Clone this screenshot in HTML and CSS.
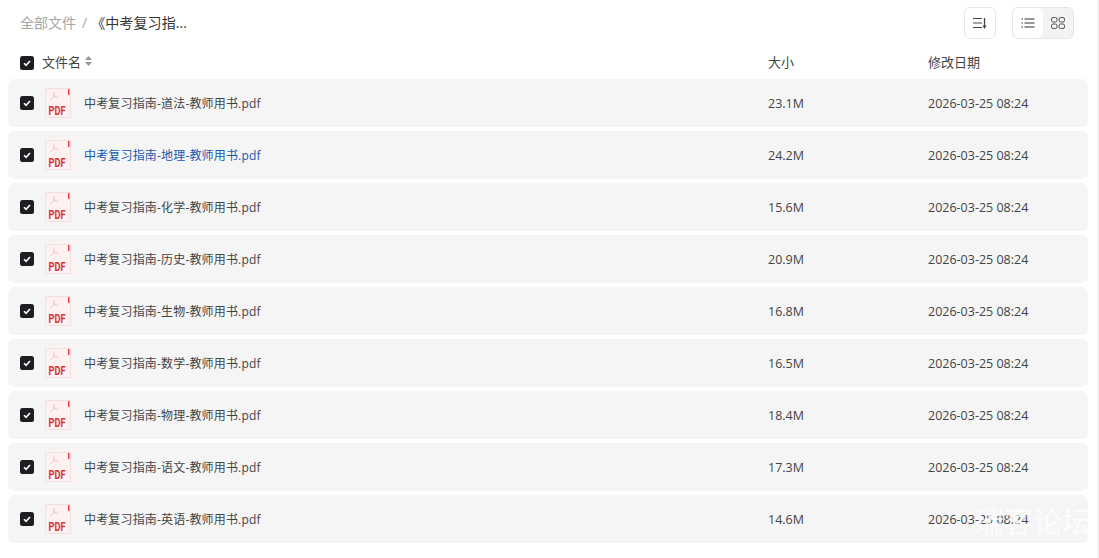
FILE: index.html
```html
<!DOCTYPE html>
<html lang="zh">
<head>
<meta charset="utf-8">
<title>文件</title>
<link rel="stylesheet" href="styles.css">
</head>
<body>
<svg class="defs" width="0" height="0" aria-hidden="true">
  <symbol id="pdf" viewBox="0 0 26 30">
    <path d="M.5.5H25.500V29.500H.5Z" fill="#fdf1f1" stroke="#f6dede"/>
    <path d="M23 1H24.500V7H23Z" fill="#e2434b"/>
    <path d="M5 12C8 10 9.500 7.500 9.500 5C9.500 4 8.500 4 8.500 5.500C9 8 11 9.500 14 9.500M8 9.500L12 8" fill="none" stroke="#f4cfd0" stroke-width="1"/>
  </symbol>
  <symbol id="check" viewBox="0 0 14 14">
    <rect width="14" height="14" rx="2.500" fill="#1d1d22"/>
    <path d="M4 7.200 6.100 9.300 10 5" fill="none" stroke="#fff" stroke-width="1.600"/>
  </symbol>
</svg>
<main class="page">
  <header class="topbar">
    <nav class="crumbs">
      <span class="crumb-root">全部文件</span>
      <span class="crumb-sep">/</span>
      <span class="crumb-current">《中考复习指...</span>
    </nav>
    <div class="tools">
      <button class="tool-btn" aria-label="排序">
        <svg width="14" height="14" viewBox="0 0 14 14"><path d="M0 2.500H9M0 7H9M0 11.500H9" stroke="#444" stroke-width="1.200" fill="none"/><path d="M11.500 2V11" stroke="#444" stroke-width="1.300"/><path d="M9.500 9.500H13.500L11.500 13Z" fill="#444"/></svg>
      </button>
      <div class="view-switch">
        <button class="view-btn view-active" aria-label="列表">
          <svg width="14" height="12" viewBox="0 0 14 12"><path d="M3.500 2H13.500M3.500 6H13.500M3.500 10H13.500" stroke="#333" stroke-width="1.100"/><path d="M.5 2H2M.5 6H2M.5 10H2" stroke="#333" stroke-width="1.100"/></svg>
        </button>
        <button class="view-btn" aria-label="网格">
          <svg width="14" height="12" viewBox="0 0 14 12" fill="none" stroke="#555" stroke-width="1"><rect x=".5" y=".5" width="5.500" height="4.500" rx="1.500"/><rect x="8" y=".5" width="5.500" height="4.500" rx="1.500"/><rect x=".5" y="7" width="5.500" height="4.500" rx="1.500"/><rect x="8" y="7" width="5.500" height="4.500" rx="1.500"/></svg>
        </button>
      </div>
    </div>
  </header>
  <div class="head-row">
    <div class="col-name">
      <svg class="check" width="14" height="14"><use href="#check"/></svg>
      <span>文件名</span>
      <svg class="sort" width="7" height="10" viewBox="0 0 7 10"><path d="M3.500 0 7 4H0ZM3.500 10 0 6H7Z" fill="#999"/></svg>
    </div>
    <div class="col-size">大小</div>
    <div class="col-date">修改日期</div>
  </div>
  <ul class="list">
    <li class="row"><div class="col-name"><svg class="check" width="14" height="14"><use href="#check"/></svg><svg class="file" width="26" height="30"><use href="#pdf"/><text x="3.500" y="26.500" textLength="17" lengthAdjust="spacingAndGlyphs" class="pdf-label">PDF</text></svg><span class="fname">中考复习指南-道法-教师用书.pdf</span></div><div class="col-size">23.1M</div><div class="col-date">2026-03-25 08:24</div></li>
    <li class="row row-hover"><div class="col-name"><svg class="check" width="14" height="14"><use href="#check"/></svg><svg class="file" width="26" height="30"><use href="#pdf"/><text x="3.500" y="26.500" textLength="17" lengthAdjust="spacingAndGlyphs" class="pdf-label">PDF</text></svg><span class="fname">中考复习指南-地理-教师用书.pdf</span></div><div class="col-size">24.2M</div><div class="col-date">2026-03-25 08:24</div></li>
    <li class="row"><div class="col-name"><svg class="check" width="14" height="14"><use href="#check"/></svg><svg class="file" width="26" height="30"><use href="#pdf"/><text x="3.500" y="26.500" textLength="17" lengthAdjust="spacingAndGlyphs" class="pdf-label">PDF</text></svg><span class="fname">中考复习指南-化学-教师用书.pdf</span></div><div class="col-size">15.6M</div><div class="col-date">2026-03-25 08:24</div></li>
    <li class="row"><div class="col-name"><svg class="check" width="14" height="14"><use href="#check"/></svg><svg class="file" width="26" height="30"><use href="#pdf"/><text x="3.500" y="26.500" textLength="17" lengthAdjust="spacingAndGlyphs" class="pdf-label">PDF</text></svg><span class="fname">中考复习指南-历史-教师用书.pdf</span></div><div class="col-size">20.9M</div><div class="col-date">2026-03-25 08:24</div></li>
    <li class="row"><div class="col-name"><svg class="check" width="14" height="14"><use href="#check"/></svg><svg class="file" width="26" height="30"><use href="#pdf"/><text x="3.500" y="26.500" textLength="17" lengthAdjust="spacingAndGlyphs" class="pdf-label">PDF</text></svg><span class="fname">中考复习指南-生物-教师用书.pdf</span></div><div class="col-size">16.8M</div><div class="col-date">2026-03-25 08:24</div></li>
    <li class="row"><div class="col-name"><svg class="check" width="14" height="14"><use href="#check"/></svg><svg class="file" width="26" height="30"><use href="#pdf"/><text x="3.500" y="26.500" textLength="17" lengthAdjust="spacingAndGlyphs" class="pdf-label">PDF</text></svg><span class="fname">中考复习指南-数学-教师用书.pdf</span></div><div class="col-size">16.5M</div><div class="col-date">2026-03-25 08:24</div></li>
    <li class="row"><div class="col-name"><svg class="check" width="14" height="14"><use href="#check"/></svg><svg class="file" width="26" height="30"><use href="#pdf"/><text x="3.500" y="26.500" textLength="17" lengthAdjust="spacingAndGlyphs" class="pdf-label">PDF</text></svg><span class="fname">中考复习指南-物理-教师用书.pdf</span></div><div class="col-size">18.4M</div><div class="col-date">2026-03-25 08:24</div></li>
    <li class="row"><div class="col-name"><svg class="check" width="14" height="14"><use href="#check"/></svg><svg class="file" width="26" height="30"><use href="#pdf"/><text x="3.500" y="26.500" textLength="17" lengthAdjust="spacingAndGlyphs" class="pdf-label">PDF</text></svg><span class="fname">中考复习指南-语文-教师用书.pdf</span></div><div class="col-size">17.3M</div><div class="col-date">2026-03-25 08:24</div></li>
    <li class="row"><div class="col-name"><svg class="check" width="14" height="14"><use href="#check"/></svg><svg class="file" width="26" height="30"><use href="#pdf"/><text x="3.500" y="26.500" textLength="17" lengthAdjust="spacingAndGlyphs" class="pdf-label">PDF</text></svg><span class="fname">中考复习指南-英语-教师用书.pdf</span></div><div class="col-size">14.6M</div><div class="col-date">2026-03-25 08:24</div></li>
  </ul>
  <div class="watermark">
    <div class="wm-title">瑞客论坛</div>
    <div class="wm-url">www.ruikeo.com</div>
  </div>
</main>
</body>
</html>
```
FILE: styles.css
```css
* { box-sizing: border-box; }
html, body { margin: 0; padding: 0; height: 100%; overflow: hidden; background: #fff; }
body { font-family: "Open Sans", "Noto Sans CJK SC", sans-serif; color: #444; font-size: 12.500px; }
.defs { position: absolute; }
.page { position: relative; width: 1099px; height: 558px; padding: 7px 9px 0 8px; border-right: 2px solid #f2f2f2; overflow: hidden; }
.topbar { display: flex; justify-content: space-between; align-items: center; height: 32px; padding: 0 14px 0 12px; }
.crumbs { display: flex; align-items: center; font-size: 14px; line-height: 18px; }
.crumb-root { color: #a6a6a6; }
.crumb-sep { color: #a6a6a6; margin: 0 4px 0 6px; }
.crumb-current { color: #333; letter-spacing: .1px; }
.tools { display: flex; gap: 16px; }
.tool-btn { width: 32px; height: 32px; padding: 0; display: flex; align-items: center; justify-content: center; background: #fff; border: 1px solid #e6e6e6; border-radius: 6px; }
.view-switch { display: flex; width: 62px; height: 32px; border: 1px solid #e6e6e6; border-radius: 6px; background: #f3f3f3; overflow: hidden; }
.view-btn { flex: 1; padding: 0; border: 0; background: transparent; display: flex; align-items: center; justify-content: center; }
.view-active { background: #fff; border-radius: 6px; }
.head-row { display: flex; align-items: center; height: 40px; padding-top: 4px; color: #444; font-size: 13px; }
.head-row .check { margin-top: 4px; }
.list { list-style: none; margin: 0; padding: 0; display: flex; flex-direction: column; gap: 4px; }
.row { display: flex; align-items: center; height: 48px; background: #f5f5f5; border-radius: 6px; }
.col-name { flex: none; width: 760px; padding-left: 12px; display: flex; align-items: center; }
.col-size { flex: none; width: 160px; }
.col-date { flex: none; }
.head-row .col-name span { margin-left: 8px; }
.sort { margin-left: 4px; }
.file { margin: 0 13px 0 11px; }
.fname { font-size: 12px; letter-spacing: .17px; line-height: 16px; margin-top: 2px; }
.row-hover .fname { color: #1558b0; }
.pdf-label { font-family: "Roboto", sans-serif; font-size: 12.500px; font-weight: 700; fill: #d9343c; }
.watermark { position: absolute; left: 975px; top: 501px; color: rgba(255,255,255,.8); text-align: center; pointer-events: none; }
.wm-title { font-family: "Noto Sans CJK SC", sans-serif; font-size: 29px; line-height: 38px; width: 116px; }
.wm-url { font-size: 10px; line-height: 12px; letter-spacing: 1px; margin-top: 1px; }
```
